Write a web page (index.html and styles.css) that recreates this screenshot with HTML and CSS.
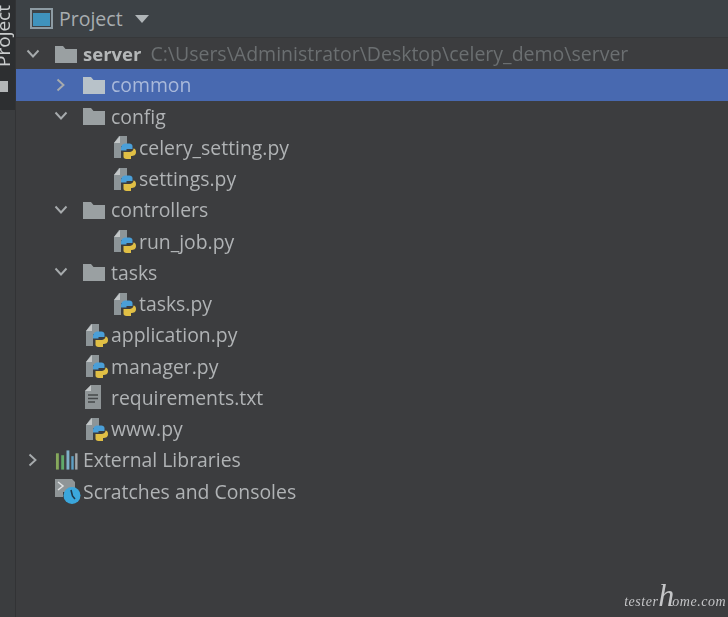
FILE: index.html
```html
<!DOCTYPE html>
<html lang="en">
<head>
<meta charset="utf-8">
<title>Project</title>
<link rel="stylesheet" href="styles.css">
</head>
<body>
<svg class="defs" width="0" height="0" aria-hidden="true">
  <symbol id="folder" viewBox="0 0 22 18"><path d="M0 1h8l2.500 3H22v14H0z" fill="#9aa0a2"/></symbol>
  <symbol id="chev-d" viewBox="0 0 14 10"><path d="M1.500 1.500 7 7.500l5.500-6" fill="none" stroke="#a7abad" stroke-width="1.900"/></symbol>
  <symbol id="chev-r" viewBox="0 0 10 14"><path d="M1.500 1.500 7.500 7l-6 5.500" fill="none" stroke="#a7abad" stroke-width="1.900"/></symbol>
  <symbol id="py" viewBox="0 0 24 24">
    <path d="M2 8 7 1h8v10H9v12H2z" fill="#8d9598"/>
    <path d="M8 1v7H2z" fill="#c3c7c8"/>
    <path d="M9 14c0-4 2-5.500 5-5.500h3.500c1.500 0 3 1 3 2.500v3h-6v1.500H9z" fill="#4a9fd8"/>
    <path d="M21.500 13.500c1.500 0 2.500 1.500 2.500 3.500 0 3-2 4-5 4v3h-4.500c-2 0-3-1-3-2.500V17h6c2 0 4-1.500 4-3.500z" fill="#e0bf45"/>
  </symbol>
  <symbol id="txt" viewBox="0 0 18 24">
    <path d="M0 6 6 0h10v24H0z" fill="#8f9597"/>
    <path d="M6 0v6H0z" fill="#c3c7c8"/>
    <path d="M3 10h10M3 13.500h10M3 17h7" stroke="#45484a" stroke-width="1.500"/>
  </symbol>
  <symbol id="libs" viewBox="0 0 24 20">
    <path d="M1 3h3v17H1z" fill="#86a95c"/>
    <path d="M6.500 5h3v15h-3z" fill="#5fa96a"/>
    <path d="M12 0h3v20h-3z" fill="#7fb0c9"/>
    <path d="M17 6h2.500v14H17z" fill="#5d9fc5"/>
    <path d="M21 3h2.500v17H21z" fill="#a3a8ab"/>
  </symbol>
  <symbol id="scratch" viewBox="0 0 26 25">
    <path d="M0 0h17l3 3v10H8v5H0z" fill="#8f9597"/>
    <path d="m3 3 5 4-5 4" fill="none" stroke="#dfe2e3" stroke-width="1.500"/>
    <circle cx="17" cy="16.500" r="8.500" fill="#3ba7dc"/>
    <path d="m16 11 1.500 6 2.500 3" fill="none" stroke="#20384a" stroke-width="1.600"/>
  </symbol>
</svg>
<div class="ide">
  <aside class="strip">
    <div class="strip-tab">
      <span class="strip-label">Project</span>
      <span class="strip-mark"></span>
    </div>
  </aside>
  <main class="panel">
    <header class="head">
      <span class="head-icon"><span class="head-icon-in"></span></span>
      <span class="head-title">Project</span>
      <span class="head-caret"></span>
    </header>
    <ul class="tree">
      <li class="row l0"><svg class="chev"><use href="#chev-d"/></svg><svg class="ico-folder"><use href="#folder"/></svg><span class="name bold">server</span><span class="path">C:\Users\Administrator\Desktop\celery_demo\server</span></li>
      <li class="row l1 sel"><svg class="chev-side"><use href="#chev-r"/></svg><svg class="ico-folder"><use href="#folder"/></svg><span class="name">common</span></li>
      <li class="row l1"><svg class="chev"><use href="#chev-d"/></svg><svg class="ico-folder"><use href="#folder"/></svg><span class="name">config</span></li>
      <li class="row l2"><svg class="ico-file"><use href="#py"/></svg><span class="name">celery_setting.py</span></li>
      <li class="row l2"><svg class="ico-file"><use href="#py"/></svg><span class="name">settings.py</span></li>
      <li class="row l1"><svg class="chev"><use href="#chev-d"/></svg><svg class="ico-folder"><use href="#folder"/></svg><span class="name">controllers</span></li>
      <li class="row l2"><svg class="ico-file"><use href="#py"/></svg><span class="name">run_job.py</span></li>
      <li class="row l1"><svg class="chev"><use href="#chev-d"/></svg><svg class="ico-folder"><use href="#folder"/></svg><span class="name">tasks</span></li>
      <li class="row l2"><svg class="ico-file"><use href="#py"/></svg><span class="name">tasks.py</span></li>
      <li class="row l3"><svg class="ico-file"><use href="#py"/></svg><span class="name">application.py</span></li>
      <li class="row l3"><svg class="ico-file"><use href="#py"/></svg><span class="name">manager.py</span></li>
      <li class="row l3"><svg class="ico-file ico-txt"><use href="#txt"/></svg><span class="name">requirements.txt</span></li>
      <li class="row l3"><svg class="ico-file"><use href="#py"/></svg><span class="name">www.py</span></li>
      <li class="row l0"><svg class="chev-side"><use href="#chev-r"/></svg><svg class="ico-folder ico-libs"><use href="#libs"/></svg><span class="name">External Libraries</span></li>
      <li class="row l4"><svg class="ico-scratch"><use href="#scratch"/></svg><span class="name">Scratches and Consoles</span></li>
    </ul>
  </main>
  <div class="mark">tester<span class="mark-h">h</span>ome.com</div>
</div>
</body>
</html>
```
FILE: styles.css
```css
* { box-sizing: border-box; }
html, body { margin: 0; padding: 0; }
body { width: 728px; height: 617px; overflow: hidden; background: #3c3d3f; font-family: "Open Sans", "Noto Sans", sans-serif; }
.defs { position: absolute; }
.ide { position: relative; display: flex; width: 728px; height: 617px; filter: blur(0.6px); }

.strip { width: 16px; flex: none; background: #3b3d3f; border-right: 1px solid #323335; }
.strip-tab { height: 110px; background: #2d2f31; display: flex; flex-direction: column; align-items: center; justify-content: flex-end; padding-bottom: 18px; overflow: hidden; }
.strip-label { writing-mode: vertical-rl; transform: rotate(180deg); font-size: 19px; line-height: 15px; color: #c9cccd; margin-left: -9px; }
.strip-mark { width: 8px; height: 11px; background: #b3b6b7; margin-top: 14px; margin-left: -8px; }

.panel { flex: 1; min-width: 0; }
.head { height: 38px; background: #3d4246; display: flex; align-items: center; padding-left: 14px; border-bottom: 1px solid #36383a; }
.head-icon { width: 23px; height: 21px; border: 2px solid #8d9ba3; padding: 3px 1px 1px; display: flex; }
.head-icon-in { flex: 1; background: #3f93bd; }
.head-title { margin-left: 6px; font-size: 19.500px; color: #a8adb0; }
.head-caret { margin-left: 12px; width: 0; height: 0; border-left: 7px solid transparent; border-right: 7px solid transparent; border-top: 8px solid #b0b5b8; }

.tree { list-style: none; margin: 0; padding: 0; }
.row { height: 31.25px; display: flex; align-items: center; font-size: 19.4px; color: #b0b3b5; white-space: nowrap; }
.sel { background: #4869b0; color: #a9b9da; }
.l0 { padding-left: 10px; }
.l1 { padding-left: 38px; }
.l2 { padding-left: 96px; }
.l3 { padding-left: 68px; }
.l4 { padding-left: 39px; }
.chev { width: 14px; height: 10px; flex: none; margin-right: 15px; }
.chev-side { width: 10px; height: 14px; flex: none; margin: 0 17px 0 2px; }
.ico-folder { width: 22px; height: 18px; flex: none; margin-right: 6px; }
.sel .ico-folder { opacity: .95; filter: brightness(1.25) saturate(1.2); }
.ico-libs { width: 23px; height: 20px; margin-right: 5px; }
.ico-file { width: 24px; height: 24px; flex: none; margin-right: 3px; }
.ico-txt { width: 18px; margin: 0 8px 0 1px; }
.ico-scratch { width: 26px; height: 25px; flex: none; margin-right: 2px; }
.bold { font-weight: 700; font-size: 18.500px; color: #b4b7b8; }
.path { margin-left: 9px; font-size: 19.500px; color: #6b6f71; }

.mark { position: absolute; right: 2px; bottom: 7px; font-family: "Liberation Serif", serif; font-style: italic; font-size: 14px; letter-spacing: .5px; color: #c4c5c7; }
.mark-h { font-size: 32px; line-height: 14px; font-weight: 400; letter-spacing: -2px; }
```
